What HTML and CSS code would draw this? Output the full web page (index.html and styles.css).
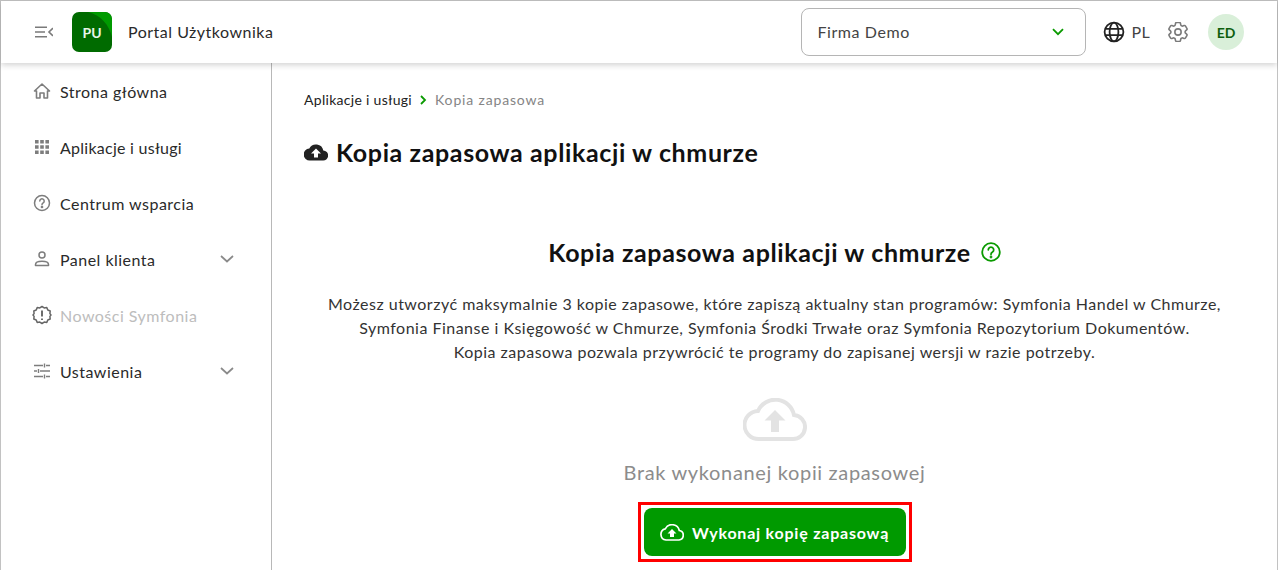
FILE: index.html
```html
<!DOCTYPE html>
<html lang="pl">
<head>
<meta charset="utf-8">
<title>Portal Użytkownika</title>
<link rel="stylesheet" href="styles.css">
</head>
<body>
<div class="app">
  <header class="topbar">
    <div class="brand">
      <svg class="menu-ico" viewBox="0 0 18 12" width="18" height="12" fill="none" stroke="#7a7a7a" stroke-width="1.6"><path d="M0 1.2h12M0 6h10M0 10.8h12M18 2.2 14 6l4 3.8"/></svg>
      <div class="logo"><svg class="logo-bg" viewBox="0 0 40 40" width="40" height="40"><rect width="40" height="40" fill="#006b00"/><path d="M16 0h18a6 6 0 0 1 6 6v19C37 13 29 3 16 0z" fill="#009a00"/></svg><span class="logo-text">PU</span></div>
      <span class="brand-name">Portal Użytkownika</span>
    </div>
    <div class="top-right">
      <div class="company"><span class="company-name">Firma Demo</span><svg viewBox="0 0 12 8" width="12" height="8" fill="none" stroke="#0a9a00" stroke-width="1.8"><path d="m1 1.2 5 5 5-5"/></svg></div>
      <div class="lang">
        <svg viewBox="0 0 22 22" width="22" height="22" fill="none" stroke="#222" stroke-width="1.8"><circle cx="11" cy="11" r="9.4"/><ellipse cx="11" cy="11" rx="4.4" ry="9.4"/><path d="M2.2 7.8h17.6M2.2 14.2h17.6"/></svg>
        <span class="lang-code">PL</span>
      </div>
      <svg class="gear" viewBox="2.500 2.500 19 19" width="20" height="20" fill="none" stroke="#7a7a7a" stroke-width="1.500" stroke-linejoin="round"><path d="M9.594 3.94c.09-.542.56-.94 1.11-.94h2.593c.55 0 1.02.398 1.11.94l.213 1.281c.063.374.313.686.645.87.074.04.147.083.22.127.325.196.72.257 1.075.124l1.217-.456a1.125 1.125 0 0 1 1.37.49l1.296 2.247a1.125 1.125 0 0 1-.26 1.431l-1.003.827c-.293.241-.438.613-.43.992a7.723 7.723 0 0 1 0 .255c-.008.378.137.75.43.991l1.004.827c.424.35.534.955.26 1.43l-1.298 2.247a1.125 1.125 0 0 1-1.369.491l-1.217-.456c-.355-.133-.75-.072-1.076.124a6.47 6.47 0 0 1-.22.128c-.331.183-.581.495-.644.869l-.213 1.281c-.09.543-.56.94-1.11.94h-2.594c-.55 0-1.019-.398-1.11-.94l-.213-1.281c-.062-.374-.312-.686-.644-.87a6.52 6.52 0 0 1-.22-.127c-.325-.196-.72-.257-1.076-.124l-1.217.456a1.125 1.125 0 0 1-1.369-.49l-1.297-2.247a1.125 1.125 0 0 1 .26-1.431l1.004-.827c.292-.24.437-.613.43-.991a6.932 6.932 0 0 1 0-.255c.007-.38-.138-.751-.43-.992l-1.004-.827a1.125 1.125 0 0 1-.26-1.43l1.297-2.247a1.125 1.125 0 0 1 1.37-.491l1.216.456c.356.133.751.072 1.076-.124.072-.044.146-.086.22-.128.332-.183.582-.495.644-.869l.214-1.28Z"/><circle cx="12" cy="12" r="3"/></svg>
      <div class="avatar">ED</div>
    </div>
  </header>
  <div class="body">
    <nav class="sidebar">
      <a class="nav-item"><svg class="nav-ico" viewBox="0 0 18 18" width="18" height="18" fill="none" stroke="#7d7d7d" stroke-width="1.6" stroke-linejoin="round"><path d="M1.500 9 9 2l7.500 7H14.500v7h-3.500v-5H7v5H3.500V9z"/></svg><span>Strona główna</span></a>
      <a class="nav-item tight"><svg class="nav-ico ico-small" viewBox="0 0 14 14" width="14" height="14" fill="#7d7d7d"><path d="M0 0h3.600v3.600H0zM5.200 0h3.600v3.600H5.200zM10.400 0H14v3.600h-3.600zM0 5.200h3.600v3.600H0zM5.200 5.200h3.600v3.600H5.200zM10.400 5.200H14v3.600h-3.600zM0 10.400h3.600V14H0zM5.200 10.400h3.600V14H5.200zM10.400 10.400H14V14h-3.600z"/></svg><span>Aplikacje i usługi</span></a>
      <a class="nav-item"><svg class="nav-ico" viewBox="0 0 18 18" width="18" height="18" fill="none" stroke="#7d7d7d" stroke-width="1.500"><circle cx="9" cy="9" r="7.500"/><path d="M6.800 7a2.200 2.200 0 1 1 3.400 1.900c-.8.500-1.200 1-1.200 1.900" stroke-linecap="round"/><circle cx="9" cy="13" r=".6" fill="#7d7d7d"/></svg><span>Centrum wsparcia</span></a>
      <a class="nav-item"><svg class="nav-ico" viewBox="0 0 18 18" width="18" height="18" fill="none" stroke="#7d7d7d" stroke-width="1.500"><circle cx="9" cy="5" r="3"/><path d="M2.500 15.500v-1c0-2 3-3.200 6.500-3.200s6.500 1.200 6.500 3.200v1z" stroke-linejoin="round"/></svg><span>Panel klienta</span><svg class="chev" viewBox="0 0 14 8" width="14" height="8" fill="none" stroke="#8a8a8a" stroke-width="1.700"><path d="m1 1 6 5.500L13 1"/></svg></a>
      <a class="nav-item off"><svg class="nav-ico ico-wide" viewBox="0 0 20 20" width="20" height="20" fill="none" stroke="#666" stroke-width="1.500"><path d="M10 1.500l2.200 1.400 2.600-.3 1 2.400 2.400 1-.3 2.600L19 10l-1.100 1.400.3 2.600-2.400 1-1 2.400-2.600-.3L10 18.500l-2.200-1.400-2.600.3-1-2.400-2.400-1 .3-2.600L1 10l1.100-1.400L1.800 6l2.400-1 1-2.400 2.600.3z" stroke-linejoin="round"/><path d="M10 5.500v6M10 13.500v1.500" stroke-width="1.900"/></svg><span>Nowości Symfonia</span></a>
      <a class="nav-item"><svg class="nav-ico" viewBox="0 0 18 18" width="18" height="18" fill="none" stroke="#7d7d7d" stroke-width="1.400"><path d="M1 3.500h9M13 3.500h4M11.500 1.500v4M1 9h3M7 9h10M5.500 7v4M1 14.500h9M13 14.500h4M11.500 12.500v4"/></svg><span>Ustawienia</span><svg class="chev" viewBox="0 0 14 8" width="14" height="8" fill="none" stroke="#8a8a8a" stroke-width="1.700"><path d="m1 1 6 5.500L13 1"/></svg></a>
    </nav>
    <main class="content">
      <div class="crumbs"><span class="crumb-link">Aplikacje i usługi</span><svg viewBox="0 0 7 10" width="7" height="10" fill="none" stroke="#0a9a00" stroke-width="1.800"><path d="m1 1 4 4-4 4"/></svg><span class="crumb-now">Kopia zapasowa</span></div>
      <h1 class="page-title"><svg viewBox="0 0 24 17" width="24" height="17"><path fill="#222" d="M19.300 6.500A7.500 7.500 0 0 0 5.300 4.500 6 6 0 0 0 6 16.500h13a5 5 0 0 0 .3-10z"/><path fill="#fff" d="M12 4.500l5 5h-3v4h-4v-4H7z"/></svg><span>Kopia zapasowa aplikacji w chmurze</span></h1>
      <section class="panel">
        <h2 class="panel-title"><span>Kopia zapasowa aplikacji w chmurze</span><svg viewBox="0 0 20 20" width="20" height="20" fill="none" stroke="#0a9a00" stroke-width="1.800"><circle cx="10" cy="10" r="8.800"/><path d="M7.300 7.800a2.700 2.700 0 1 1 4.200 2.300c-1 .6-1.500 1.100-1.500 2.200" stroke-linecap="round"/><circle cx="10" cy="15" r=".5" fill="#0a9a00"/></svg></h2>
        <p class="panel-text">Możesz utworzyć maksymalnie 3 kopie zapasowe, które zapiszą aktualny stan programów: Symfonia Handel w Chmurze,<br>Symfonia Finanse i Księgowość w Chmurze, Symfonia Środki Trwałe oraz Symfonia Repozytorium Dokumentów.<br>Kopia zapasowa pozwala przywrócić te programy do zapisanej wersji w razie potrzeby.</p>
        <svg class="big-cloud" viewBox="0 0 64 44" width="64" height="44"><path fill="none" stroke="#e3e3e3" stroke-width="4" d="M51 17A19 19 0 0 0 15 13 14 14 0 0 0 16 41h33a12 12 0 0 0 2-24z"/><path fill="#e3e3e3" d="M32 12l10.500 10.500h-6.500V34h-8V22.500h-6.500z"/></svg>
        <p class="empty">Brak wykonanej kopii zapasowej</p>
        <div class="highlight">
          <button class="cta"><svg viewBox="0 0 24 17" width="24" height="17"><path fill="none" stroke="#fff" stroke-width="1.700" d="M19.300 6.500A7.500 7.500 0 0 0 5.300 4.800 5.700 5.700 0 0 0 6 16h13a4.800 4.800 0 0 0 .3-9.500z"/><path fill="#fff" d="M12 5l4.500 4.500H14V13h-4V9.500H7.500z"/></svg><span>Wykonaj kopię zapasową</span></button>
        </div>
      </section>
    </main>
  </div>
</div>
</body>
</html>
```
FILE: styles.css
```css
* { box-sizing: border-box; }
html, body { margin: 0; height: 100%; overflow: hidden; background: #fff; }
body { font-family: "Lato", "Noto Sans", sans-serif; color: #222; }
.app { height: 570px; display: flex; flex-direction: column; border: 1px solid #c2c2c2; border-bottom: 0; }
.topbar { height: 62px; flex: none; display: flex; align-items: center; justify-content: space-between; background: #fff; box-shadow: 0 2px 6px rgba(0,0,0,.18); position: relative; z-index: 2; padding: 0 33px 0 34px; }
.brand { display: flex; align-items: center; }
.menu-ico { margin-right: 19px; }
.logo { width: 40px; height: 40px; border-radius: 7px; overflow: hidden; position: relative; display: flex; align-items: center; justify-content: center; }
.logo-bg { position: absolute; inset: 0; }
.logo-text { position: relative; color: #e8f5e8; font-size: 14px; font-weight: 700; }
.brand-name { margin-left: 16px; padding-bottom: 2px; font-size: 16px; letter-spacing: .5px; color: #2a2a2a; }
.top-right { display: flex; align-items: center; }
.company { width: 285px; height: 48px; border: 1px solid #b5b5b5; border-radius: 8px; display: flex; align-items: center; justify-content: space-between; padding: 0 21px 0 15px; font-size: 16px; letter-spacing: .6px; color: #444; }
.company-name { padding-bottom: 2px; }
.lang { margin-left: 17px; display: flex; align-items: center; gap: 6px; font-size: 16px; color: #444; letter-spacing: .4px; }
.lang-code { padding-bottom: 2px; }
.gear { margin-left: 18px; }
.avatar { margin-left: 20px; width: 36px; height: 36px; border-radius: 50%; background: #d9efd9; color: #0e5f0e; font-size: 14px; font-weight: 700; display: flex; align-items: center; justify-content: center; }
.body { flex: 1; display: flex; min-height: 0; }
.sidebar { width: 271px; flex: none; border-right: 1px solid #b8b8b8; }
.nav-item { height: 56px; display: flex; align-items: center; padding: 0 37px 0 32px; font-size: 16px; letter-spacing: .48px; color: #2a2a2a; }
.nav-item.tight { letter-spacing: .26px; }
.nav-ico { flex: none; margin-right: 9px; }
.ico-small { margin-left: 2px; margin-right: 11px; }
.ico-wide { margin-left: -1px; margin-right: 8px; }
.nav-item.off { color: #bdbdbd; }
.chev { margin-left: auto; }
.content { flex: 1; min-width: 0; padding: 28px 32px 0; }
.crumbs { display: flex; align-items: center; gap: 8px; height: 18px; font-size: 14px; letter-spacing: .3px; color: #222; }
.crumb-link, .crumb-now { padding-bottom: 2px; }
.crumb-now { color: #858585; letter-spacing: .84px; }
.page-title { margin: 27px 0 0; display: flex; align-items: center; gap: 8px; font-size: 25px; font-weight: 700; line-height: 32px; letter-spacing: .62px; color: #111; }
.panel { margin-top: 68px; display: flex; flex-direction: column; align-items: center; }
.panel-title { margin: 0; display: flex; align-items: center; gap: 10px; font-size: 25px; font-weight: 700; line-height: 32px; letter-spacing: .62px; color: #111; }
.panel-text { margin: 24px 0 0; text-align: center; font-size: 16px; line-height: 24px; letter-spacing: .49px; color: #333; white-space: nowrap; }
.big-cloud { margin-top: 34px; display: block; }
.empty { margin: 16px 0 0; font-size: 20px; line-height: 28px; letter-spacing: .66px; color: #8c8c8c; }
.highlight { margin-top: 16px; border: 3px solid #f00; padding: 3px; }
.cta { display: flex; align-items: center; justify-content: center; gap: 8px; width: 262px; height: 48px; border: 0; border-radius: 8px; background: #009a00; color: #fff; font: 700 16px "Lato", "Noto Sans", sans-serif; letter-spacing: .78px; }
```
